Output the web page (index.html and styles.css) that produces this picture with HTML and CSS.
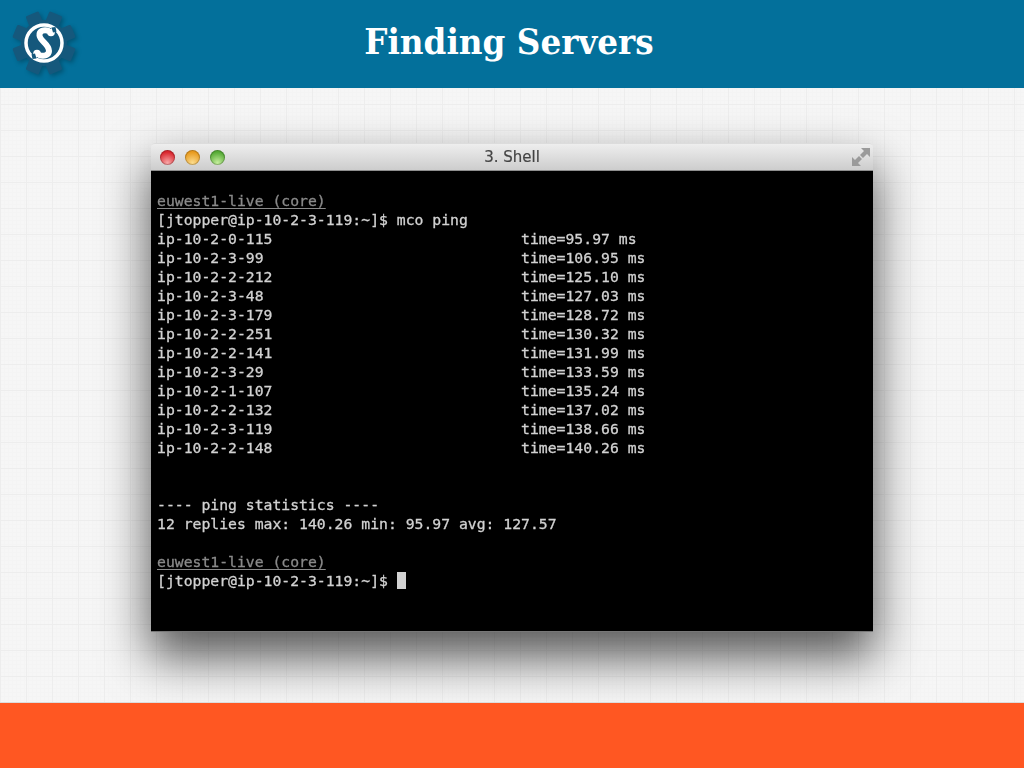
FILE: index.html
```html
<!DOCTYPE html>
<html lang="en">
<head>
<meta charset="utf-8">
<title>Finding Servers</title>
<link rel="stylesheet" href="styles.css">
</head>
<body>
<div class="slide">
  <header class="header">
    <svg class="logo" width="72" height="72" viewBox="0 0 72 72">
      <g class="gear" transform="rotate(22.5 36 36)">
        <circle cx="36" cy="36" r="23"/>
        <rect x="29" y="4.500" width="14" height="17" rx="1.500"/>
        <rect x="29" y="50.500" width="14" height="17" rx="1.500"/>
        <rect x="29" y="4.500" width="14" height="17" rx="1.500" transform="rotate(45 36 36)"/>
        <rect x="29" y="50.500" width="14" height="17" rx="1.500" transform="rotate(45 36 36)"/>
        <rect x="29" y="4.500" width="14" height="17" rx="1.500" transform="rotate(90 36 36)"/>
        <rect x="29" y="50.500" width="14" height="17" rx="1.500" transform="rotate(90 36 36)"/>
        <rect x="29" y="4.500" width="14" height="17" rx="1.500" transform="rotate(135 36 36)"/>
        <rect x="29" y="50.500" width="14" height="17" rx="1.500" transform="rotate(135 36 36)"/>
      </g>
      <circle cx="36" cy="36" r="18" class="ring"/>
      <path class="ess" d="M41 24C36 22 31 24 31.500 28.500C32 34 41 37 41 44C41 48 36 50 31 48"/>
      <circle cx="43" cy="25.500" r="3.800" fill="#fff"/>
      <circle cx="29" cy="46.500" r="3.800" fill="#fff"/>
      <path d="M43.500 20.500l1.500 5 3.500-.8-1-4.700zM28.500 51.500l-1.500-5-3.500.8 1 4.700z" fill="#15587c"/>
    </svg>
    <h1 class="title">Finding Servers</h1>
  </header>
  <main class="stage">
    <section class="window">
      <div class="titlebar">
        <span class="light red"></span>
        <span class="light amber"></span>
        <span class="light green"></span>
        <span class="wintitle">3. Shell</span>
        <svg class="expand" width="20" height="20" viewBox="0 0 20 20">
          <path d="M10 1h9v9l-3-3-4 4-3-3 4-4zM1 10l3 3 4-4 3 3-4 4 3 3H1z" fill="#9a9a9a"/>
        </svg>
      </div>
      <pre class="term"><span class="host">euwest1-live (core)</span>
[jtopper@ip-10-2-3-119:~]$ mco ping
ip-10-2-0-115                            time=95.97 ms
ip-10-2-3-99                             time=106.95 ms
ip-10-2-2-212                            time=125.10 ms
ip-10-2-3-48                             time=127.03 ms
ip-10-2-3-179                            time=128.72 ms
ip-10-2-2-251                            time=130.32 ms
ip-10-2-2-141                            time=131.99 ms
ip-10-2-3-29                             time=133.59 ms
ip-10-2-1-107                            time=135.24 ms
ip-10-2-2-132                            time=137.02 ms
ip-10-2-3-119                            time=138.66 ms
ip-10-2-2-148                            time=140.26 ms


---- ping statistics ----
12 replies max: 140.26 min: 95.97 avg: 127.57

<span class="host">euwest1-live (core)</span>
[jtopper@ip-10-2-3-119:~]$ <span class="cursor"> </span></pre>
    </section>
  </main>
  <footer class="footer"></footer>
</div>
</body>
</html>
```
FILE: styles.css
```css
* { box-sizing: border-box; }
html, body { margin: 0; padding: 0; }
body { width: 1024px; height: 768px; overflow: hidden; }
.slide { width: 1024px; height: 768px; display: flex; flex-direction: column; background: #f5f5f5; }
.header {
  height: 88px;
  background: #03709b;
  display: flex;
  align-items: center;
  justify-content: center;
  position: relative;
  flex: none;
}
.logo { position: absolute; left: 8px; top: 7px; filter: drop-shadow(2px 2px 2px rgba(0,0,0,.25)); }
.gear { fill: #15587c; }
.ring { fill: #15587c; stroke: #fff; stroke-width: 3.500; }
.ess { fill: none; stroke: #fff; stroke-width: 6; }
.title {
  margin: 0 0 4px;
  padding-right: 6px;
  font: bold 36.300px/1 "DejaVu Serif Condensed", "DejaVu Serif", serif;
  color: #fff;
}
.stage {
  flex: 1;
  padding: 55px 151px 0;
  background-color: #f6f6f6;
  background-image:
    linear-gradient(#ededed 1px, transparent 1px),
    linear-gradient(90deg, #ededed 1px, transparent 1px),
    linear-gradient(#f4f4f4 1px, transparent 1px),
    linear-gradient(90deg, #f4f4f4 1px, transparent 1px);
  background-size: 26px 26px, 26px 26px, 4px 4px, 4px 4px;
  background-position: 0 -10px, 0 -10px, 0 0, 0 0;
  overflow: hidden;
}
.window {
  width: 722px;
  height: 489px;
  border-radius: 4px 4px 0 0;
  box-shadow: 0 24px 48px 2px rgba(0,0,0,.64);
  display: flex;
  flex-direction: column;
}
.titlebar {
  height: 28px;
  flex: none;
  display: flex;
  align-items: center;
  padding-left: 9px;
  gap: 10px;
  position: relative;
  border-radius: 4px 4px 0 0;
  background: linear-gradient(#eeeeee, #cdcdcd);
  border-top: 1px solid #dcdcdc;
  border-bottom: 1px solid #8e8e8e;
}
.light { width: 15px; height: 15px; border-radius: 50%; box-shadow: inset 0 0 0 1px rgba(0,0,0,.22); filter: blur(.3px); }
.red { background: radial-gradient(circle at 50% 85%, #f8a8a8, #d9262e 72%); }
.amber { background: radial-gradient(circle at 50% 85%, #fbdc8e, #e89a1e 72%); }
.green { background: radial-gradient(circle at 50% 85%, #c6ee9e, #55aa35 72%); }
.wintitle {
  position: absolute;
  left: 0; right: 0; top: 3px;
  text-align: center;
  font: 15px/20px "DejaVu Sans", sans-serif;
  color: #444;
  -webkit-text-stroke: .2px #444;
  filter: blur(.4px);
}
.expand { position: absolute; right: 2px; top: 3px; filter: blur(.3px); }
.term {
  flex: 1;
  margin: 0;
  padding: 20px 0 0 6px;
  background: #000;
  border-bottom: 1px solid #777;
  color: #d2d2d2;
  font: 14.750px/19px "DejaVu Sans Mono", monospace;
  -webkit-text-stroke: .3px #d2d2d2;
  overflow: hidden;
  filter: blur(.6px);
}
.host { color: #8a8a8a; -webkit-text-stroke: .3px #8a8a8a; text-decoration: underline; text-underline-offset: 2px; }
.cursor { background: #d2d2d2; }
.footer { height: 66px; flex: none; background: #ff5722; border-top: 1px solid #dcdcdc; }
```
